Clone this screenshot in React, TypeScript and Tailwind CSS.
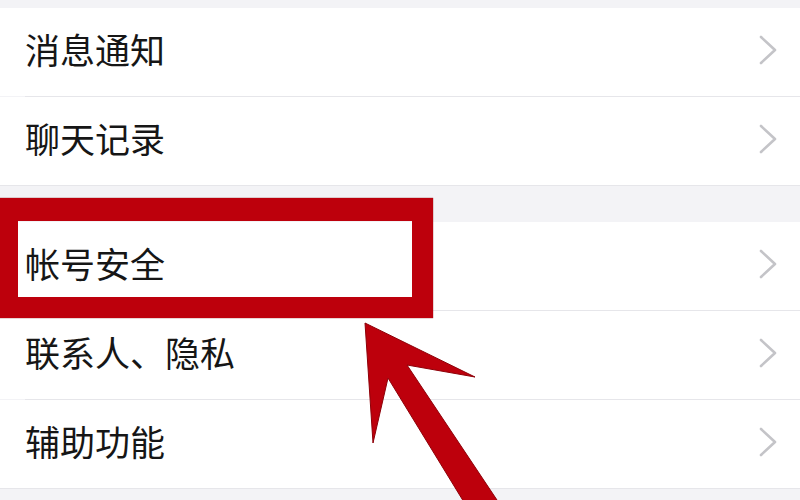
const sections = [
  ["消息通知", "聊天记录"],
  ["帐号安全", "联系人、隐私", "辅助功能"],
];

function Chevron() {
  return (
    <svg width="19" height="30" viewBox="0 0 19 30" className="text-[#c4c4c8]">
      <polyline
        points="2,2 16,15 2,28"
        fill="none"
        stroke="currentColor"
        strokeWidth="2.6"
        strokeLinecap="round"
        strokeLinejoin="round"
      />
    </svg>
  );
}

function Row({ label, last }: { label: string; last: boolean }) {
  return (
    <div className="relative flex h-[88px] items-center justify-between bg-white pl-[25px] pr-[22px]">
      <span className="mb-[8px] text-[35px] leading-none text-[#161616]">{label}</span>
      <div className="mb-[4px]">
        <Chevron />
      </div>
      {!last && <div className="absolute bottom-[-1px] left-[25px] right-0 h-px bg-[#e6e6ea]" />}
    </div>
  );
}

export default function App() {
  return (
    <div
      className="relative h-[500px] w-[800px] overflow-hidden bg-[#f3f3f6]"
      style={{ fontFamily: '"Noto Sans CJK SC", "Noto Sans", sans-serif' }}
    >
      <div className="flex flex-col pt-[8px]">
        {sections.map((rows, i) => (
          <div
            key={i}
            className={`flex flex-col gap-px border-b border-[#e6e6ea] ${i === 0 ? "mb-[36px]" : ""}`}
          >
            {rows.map((label, j) => (
              <Row key={label} label={label} last={j === rows.length - 1} />
            ))}
          </div>
        ))}
      </div>

      {/* annotation: highlight box */}
      <div className="absolute left-0 top-[198px] h-[120px] w-[433px] border-b-[21px] border-l-[18px] border-r-[21px] border-t-[23px] border-[#bd000c] shadow-[0_0_1px_#7a0000]" />

      {/* annotation: arrow */}
      <svg className="absolute inset-0" width="800" height="500" viewBox="0 0 800 500">
        <polygon
          points="365,323 475,377 407,365 505,512 470,512 388,378 373,443"
          fill="#bd000c"
          stroke="#8e0008"
          strokeWidth="1"
          strokeLinejoin="miter"
        />
      </svg>
    </div>
  );
}
